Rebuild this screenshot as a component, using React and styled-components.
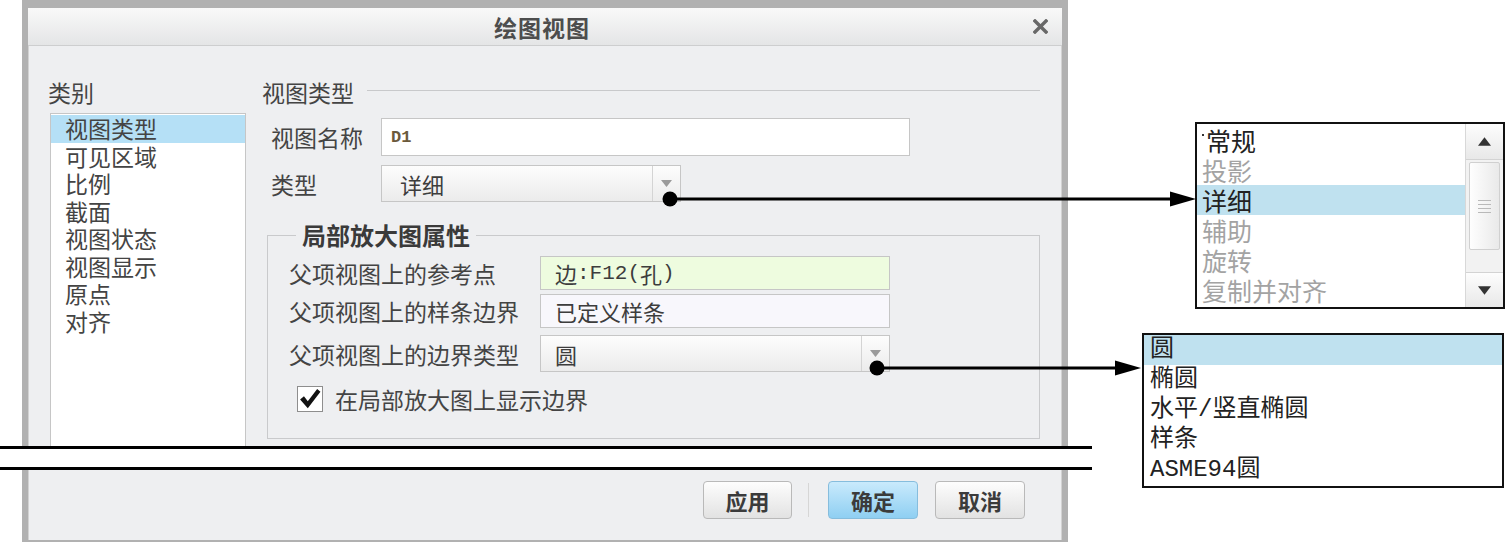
import React from 'react';
import styled, { createGlobalStyle } from 'styled-components';

const GlobalStyle = createGlobalStyle`
  body {
    margin: 0;
    background: #fff;
    font-family: "Noto Sans CJK SC", "Noto Sans", sans-serif;
    color: #404040;
  }
`;

const Stage = styled.div`
  position: relative;
  width: 1507px;
  height: 542px;
  overflow: hidden;
  display: flex;
  background: #fff;
`;

const DialogColumn = styled.div`
  width: 1046px;
  margin-left: 22px;
  flex-shrink: 0;
  display: flex;
  flex-direction: column;
`;

const DialogTop = styled.div`
  height: 446px;
  box-sizing: border-box;
  border: 6px solid #b1b1b1;
  border-top-width: 8px;
  border-bottom: none;
  background: #eeeff1;
  display: flex;
  flex-direction: column;
  box-shadow: inset 1px 0 0 #d2d2d2, inset -1px 0 0 #d2d2d2;
`;

const TitleBar = styled.div`
  height: 38px;
  flex-shrink: 0;
  box-sizing: border-box;
  border-bottom: 1px solid #cdcecf;
  background: linear-gradient(#f9f9f9, #e4e5e6);
  display: grid;
  grid-template-columns: 1fr auto 1fr;
  align-items: center;
`;

const Title = styled.div`
  grid-column: 2;
  font-size: 23px;
  font-weight: 700;
  color: #4d4d4d;
  letter-spacing: 1px;
  margin-right: 6px;
`;

const Close = styled.div`
  grid-column: 3;
  justify-self: end;
  margin-right: 14px;
  display: flex;
`;

const Body = styled.div`
  flex: 1;
  min-height: 0;
  display: flex;
  gap: 16px;
  padding: 0 22px 0 20px;
`;

const LeftPane = styled.div`
  width: 198px;
  display: flex;
  flex-direction: column;
  padding-top: 32px;
`;

const Label = styled.div`
  font-size: 23px;
  line-height: 28px;
  color: #444;
  white-space: nowrap;
`;

const ListBox = styled.div`
  margin: 7px 0 0 2px;
  flex: 1;
  background: #fff;
  border: 1px solid #c6c6c6;
  border-bottom: none;
  padding-top: 1px;
`;

const ListItem = styled.div`
  height: 27.5px;
  line-height: 27.5px;
  padding-left: 14px;
  font-size: 23px;
  color: #444;
  background: ${(p) => (p.$selected ? '#b5e0f6' : 'transparent')};
`;

const RightPane = styled.div`
  flex: 1;
  display: flex;
  flex-direction: column;
  padding-top: 32px;
`;

const SectionHeader = styled.div`
  display: flex;
  align-items: center;
  gap: 13px;
  height: 28px;
`;

const Rule = styled.div`
  flex: 1;
  height: 1px;
  margin-bottom: 4px;
  background: #c8c9cb;
`;

const FormRow = styled.div`
  display: flex;
  align-items: center;
  margin: ${(p) => p.$top}px 0 0 9px;
`;

const RowLabel = styled(Label)`
  width: ${(p) => p.$w}px;
  flex-shrink: 0;
`;

const TextBox = styled.div`
  width: ${(p) => p.$w}px;
  height: ${(p) => p.$h}px;
  box-sizing: border-box;
  border: 1px solid #c6c6c6;
  background: ${(p) => p.$bg || '#fff'};
  padding-left: ${(p) => p.$pad || 14}px;
  display: flex;
  align-items: center;
  font-size: 22px;
  color: #3d3d3d;
  white-space: nowrap;
`;

const Mono = styled.span`
  font-family: "Liberation Mono", monospace;
  font-size: ${(p) => p.$size || 21}px;
  font-weight: ${(p) => p.$weight || 400};
  color: ${(p) => p.$color || 'inherit'};
`;

const Combo = styled.div`
  width: ${(p) => p.$w}px;
  height: ${(p) => p.$h}px;
  box-sizing: border-box;
  border: 1px solid #c6c6c6;
  background: linear-gradient(#fdfdfd, #ebebeb);
  display: flex;
`;

const ComboText = styled.div`
  flex: 1;
  display: flex;
  align-items: center;
  padding-left: ${(p) => p.$pad}px;
  font-size: 22px;
  color: #3d3d3d;
`;

const ComboArrow = styled.div`
  width: 27px;
  border-left: 1px solid #d4d4d4;
  display: flex;
  align-items: center;
  justify-content: center;
`;

const Group = styled.fieldset`
  margin: 19px 0 0 5px;
  padding: 0 0 25px 21px;
  border: 1px solid #c9cacc;
  min-width: 0;
`;

const Legend = styled.legend`
  margin-left: 7px;
  padding: 0 6px;
  font-size: 24px;
  font-weight: 700;
  line-height: 28px;
  color: #3a3a3a;
`;

const GroupRow = styled.div`
  display: flex;
  align-items: center;
  margin-top: ${(p) => p.$top}px;
`;

const CheckRow = styled.div`
  display: flex;
  align-items: center;
  gap: 12px;
  margin: 13px 0 0 8px;
`;

const CheckBox = styled.div`
  width: 26px;
  height: 26px;
  box-sizing: border-box;
  border: 1px solid #8e8e8e;
  background: #fff;
  display: flex;
  align-items: center;
  justify-content: center;
`;

const BreakBand = styled.div`
  flex-shrink: 0;
  margin-left: -22px;
  width: 1092px;
  height: 24px;
  box-sizing: border-box;
  border-top: 3px solid #000;
  border-bottom: 3px solid #000;
  background: #fff;
`;

const DialogBottom = styled.div`
  flex: 1;
  box-sizing: border-box;
  border: 6px solid #b1b1b1;
  border-top: none;
  border-bottom-width: 2px;
  background: #eeeff1;
  display: flex;
  justify-content: flex-end;
  align-items: flex-start;
  padding: 11px 37px 0 0;
  box-shadow: inset 1px 0 0 #d2d2d2, inset -1px 0 0 #d2d2d2;
`;

const Button = styled.div`
  width: ${(p) => p.$w}px;
  height: 38px;
  box-sizing: border-box;
  border-radius: 4px;
  border: 1px solid ${(p) => (p.$primary ? '#86bddd' : '#b9b9b9')};
  background: ${(p) =>
    p.$primary
      ? 'linear-gradient(#c9eafc, #8fcff2)'
      : 'linear-gradient(#fdfdfd, #e2e2e2)'};
  display: flex;
  align-items: center;
  justify-content: center;
  font-size: 22px;
  font-weight: 700;
  color: #3b3b3b;
`;

const ButtonSep = styled.div`
  width: 1px;
  height: 34px;
  margin: 2px 19px 0 16px;
  background: #d6d6d6;
`;

const Gap = styled.div`
  width: ${(p) => p.$w}px;
`;

const Side = styled.div`
  flex: 1;
  display: flex;
  flex-direction: column;
  align-items: flex-end;
  padding: 122px 2px 0 0;
  gap: 24px;
`;

const Popup = styled.div`
  width: ${(p) => p.$w}px;
  height: ${(p) => p.$h}px;
  margin-right: ${(p) => p.$mr || 0}px;
  box-sizing: border-box;
  border: 2px solid #111;
  background: #fff;
  display: flex;
`;

const Options = styled.div`
  flex: 1;
  padding-top: ${(p) => p.$top || 0}px;
`;

const Option = styled.div`
  height: 30px;
  line-height: 30px;
  padding-left: ${(p) => p.$pad}px;
  font-size: ${(p) => p.$size}px;
  font-family: ${(p) =>
    p.$mono
      ? '"Liberation Mono", "Noto Sans CJK SC", monospace'
      : '"Noto Sans CJK SC", sans-serif'};
  color: ${(p) => (p.$muted ? '#a3a3a3' : '#222')};
  background: ${(p) => (p.$selected ? '#bfe1ef' : 'transparent')};
  white-space: nowrap;
`;

const Speck = styled.span`
  display: inline-block;
  width: 2px;
  height: 2px;
  margin-right: 2px;
  background: #333;
  vertical-align: 15px;
`;

const ScrollBar = styled.div`
  width: 37px;
  border-left: 1px solid #d8d8d8;
  background: #f2f2f2;
  display: flex;
  flex-direction: column;
`;

const ScrollButton = styled.div`
  height: ${(p) => p.$h}px;
  box-sizing: border-box;
  background: linear-gradient(#fdfdfd, #e8e8e8);
  border-bottom: ${(p) => (p.$down ? 'none' : '1px solid #d3d3d3')};
  border-top: ${(p) => (p.$down ? '1px solid #d3d3d3' : 'none')};
  display: flex;
  align-items: center;
  justify-content: center;
`;

const Thumb = styled.div`
  height: 88px;
  margin: 2px 3px 0;
  box-sizing: border-box;
  border: 1px solid #d0d0d0;
  border-radius: 2px;
  background: linear-gradient(90deg, #fefefe, #e9e9e9);
  display: flex;
  flex-direction: column;
  align-items: center;
  justify-content: center;
  gap: 3px;
`;

const Grip = styled.div`
  width: 13px;
  height: 1px;
  background: #b9b9b9;
`;

const Track = styled.div`
  flex: 1;
`;

const Overlay = styled.svg`
  position: absolute;
  left: 0;
  top: 0;
  pointer-events: none;
`;

const Triangle = ({ up, color = '#9a9a9a', w = 11, h = 7 }) => (
  <svg width={w} height={h} viewBox="0 0 11 7">
    <polygon points={up ? '0,7 5.5,0 11,7' : '0,0 11,0 5.5,7'} fill={color} />
  </svg>
);

const categories = ['视图类型', '可见区域', '比例', '截面', '视图状态', '视图显示', '原点', '对齐'];

const viewTypes = [
  { t: '常规', speck: true },
  { t: '投影', muted: true },
  { t: '详细', selected: true },
  { t: '辅助', muted: true },
  { t: '旋转', muted: true },
  { t: '复制并对齐', muted: true },
];

const boundaryTypes = ['圆', '椭圆', '水平/竖直椭圆', '样条', 'ASME94圆'];

const App = () => (
  <Stage>
    <GlobalStyle />
    <DialogColumn>
      <DialogTop>
        <TitleBar>
          <Title>绘图视图</Title>
          <Close>
            <svg width="15" height="15" viewBox="0 0 15 15">
              <path d="M2 2 L13 13 M13 2 L2 13" stroke="#686868" strokeWidth="3.4" strokeLinecap="square" />
            </svg>
          </Close>
        </TitleBar>
        <Body>
          <LeftPane>
            <Label>类别</Label>
            <ListBox>
              {categories.map((c, i) => (
                <ListItem key={c} $selected={i === 0}>
                  {c}
                </ListItem>
              ))}
            </ListBox>
          </LeftPane>
          <RightPane>
            <SectionHeader>
              <Label>视图类型</Label>
              <Rule />
            </SectionHeader>
            <FormRow $top={12}>
              <RowLabel $w={110}>视图名称</RowLabel>
              <TextBox $w={529} $h={38} $pad={9}>
                <Mono $size={17} $weight={700} $color="#6b5a3c">D1</Mono>
              </TextBox>
            </FormRow>
            <FormRow $top={9}>
              <RowLabel $w={110}>类型</RowLabel>
              <Combo $w={300} $h={37}>
                <ComboText $pad={18}>详细</ComboText>
                <ComboArrow>
                  <Triangle />
                </ComboArrow>
              </Combo>
            </FormRow>
            <Group>
              <Legend>局部放大图属性</Legend>
              <GroupRow $top={7}>
                <RowLabel $w={251}>父项视图上的参考点</RowLabel>
                <TextBox $w={350} $h={34} $bg="#eefcdf">
                  边<Mono>:F12(</Mono>孔<Mono>)</Mono>
                </TextBox>
              </GroupRow>
              <GroupRow $top={4}>
                <RowLabel $w={251}>父项视图上的样条边界</RowLabel>
                <TextBox $w={350} $h={34} $bg="#f8f7fc">
                  已定义样条
                </TextBox>
              </GroupRow>
              <GroupRow $top={7}>
                <RowLabel $w={251}>父项视图上的边界类型</RowLabel>
                <Combo $w={350} $h={37}>
                  <ComboText $pad={14}>圆</ComboText>
                  <ComboArrow>
                    <Triangle />
                  </ComboArrow>
                </Combo>
              </GroupRow>
              <CheckRow>
                <CheckBox>
                  <svg width="22" height="22" viewBox="0 0 20 20">
                    <path d="M1 10.5 L4.5 7.5 L8 12 L16.5 1 L19.5 3.5 L8 18.5 Z" fill="#111" />
                  </svg>
                </CheckBox>
                <Label>在局部放大图上显示边界</Label>
              </CheckRow>
            </Group>
          </RightPane>
        </Body>
      </DialogTop>
      <BreakBand />
      <DialogBottom>
        <Button $w={89}>应用</Button>
        <ButtonSep />
        <Button $w={90} $primary>
          确定
        </Button>
        <Gap $w={17} />
        <Button $w={90}>取消</Button>
      </DialogBottom>
    </DialogColumn>

    <Side>
      <Popup $w={310} $h={187}>
        <Options $top={1}>
          {viewTypes.map((v) => (
            <Option key={v.t} $pad={5} $size={25} $muted={v.muted} $selected={v.selected}>
              {v.speck && <Speck />}
              {v.t}
            </Option>
          ))}
        </Options>
        <ScrollBar>
          <ScrollButton $h={36}>
            <Triangle up color="#333" w={13} h={9} />
          </ScrollButton>
          <Thumb>
            <Grip />
            <Grip />
            <Grip />
            <Grip />
          </Thumb>
          <Track />
          <ScrollButton $h={35} $down>
            <Triangle color="#333" w={13} h={9} />
          </ScrollButton>
        </ScrollBar>
      </Popup>
      <Popup $w={362} $h={155} $mr={1}>
        <Options>
          {boundaryTypes.map((b, i) => (
            <Option key={b} $pad={6} $size={24} $mono $selected={i === 0}>
              {b}
            </Option>
          ))}
        </Options>
      </Popup>
    </Side>

    <Overlay width="1507" height="542" viewBox="0 0 1507 542">
      <circle cx="670" cy="199" r="7.5" fill="#000" />
      <line x1="670" y1="199" x2="1176" y2="199" stroke="#000" strokeWidth="3" />
      <polygon points="1170,191.5 1196,199 1170,206.5" fill="#000" />
      <circle cx="877" cy="368" r="7.5" fill="#000" />
      <line x1="877" y1="368" x2="1120" y2="368" stroke="#000" strokeWidth="3" />
      <polygon points="1115,360.5 1141,368 1115,375.5" fill="#000" />
    </Overlay>
  </Stage>
);

export default App;
